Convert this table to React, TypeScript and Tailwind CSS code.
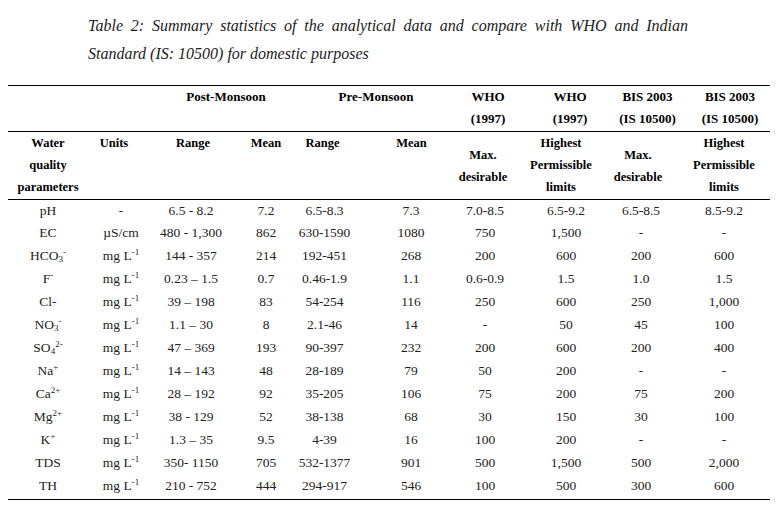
import React from 'react';

type Cell = React.ReactNode;

const Sup = ({ children }: { children: React.ReactNode }) => (
  <sup className="text-[9px] leading-none">{children}</sup>
);
const Sub = ({ children }: { children: React.ReactNode }) => (
  <sub className="text-[9px] leading-none">{children}</sub>
);

const mgL = (
  <>
    mg L<Sup>-1</Sup>
  </>
);

const rows: Cell[][] = [
  ['pH', '-', '6.5 - 8.2', '7.2', '6.5-8.3', '7.3', '7.0-8.5', '6.5-9.2', '6.5-8.5', '8.5-9.2'],
  ['EC', 'µS/cm', '480 - 1,300', '862', '630-1590', '1080', '750', '1,500', '-', '-'],
  [
    <>
      HCO<Sub>3</Sub>
      <Sup>-</Sup>
    </>,
    mgL, '144 - 357', '214', '192-451', '268', '200', '600', '200', '600',
  ],
  [
    <>
      F<Sup>-</Sup>
    </>,
    mgL, '0.23 – 1.5', '0.7', '0.46-1.9', '1.1', '0.6-0.9', '1.5', '1.0', '1.5',
  ],
  ['Cl-', mgL, '39 – 198', '83', '54-254', '116', '250', '600', '250', '1,000'],
  [
    <>
      NO<Sub>3</Sub>
      <Sup>-</Sup>
    </>,
    mgL, '1.1 – 30', '8', '2.1-46', '14', '-', '50', '45', '100',
  ],
  [
    <>
      SO<Sub>4</Sub>
      <Sup>2-</Sup>
    </>,
    mgL, '47 – 369', '193', '90-397', '232', '200', '600', '200', '400',
  ],
  [
    <>
      Na<Sup>+</Sup>
    </>,
    mgL, '14 – 143', '48', '28-189', '79', '50', '200', '-', '-',
  ],
  [
    <>
      Ca<Sup>2+</Sup>
    </>,
    mgL, '28 – 192', '92', '35-205', '106', '75', '200', '75', '200',
  ],
  [
    <>
      Mg<Sup>2+</Sup>
    </>,
    mgL, '38 - 129', '52', '38-138', '68', '30', '150', '30', '100',
  ],
  [
    <>
      K<Sup>+</Sup>
    </>,
    mgL, '1.3 – 35', '9.5', '4-39', '16', '100', '200', '-', '-',
  ],
  ['TDS', mgL, '350- 1150', '705', '532-1377', '901', '500', '1,500', '500', '2,000'],
  ['TH', mgL, '210 - 752', '444', '294-917', '546', '100', '500', '300', '600'],
];

const grid = 'grid grid-cols-[77px_72px_72px_66px_72px_80px_76px_76px_78px_94px]';
const bodyPad = ['pl-[3px]', '', 'pr-[4px]', 'pl-[8px]', 'pr-[13px]', 'pl-[8px]', '', 'pl-[10px]', 'pl-[6px]', ''];

const App = () => {
  return (
    <div className="w-[783px] h-[516px] bg-white text-[#1c1c1c] overflow-hidden font-['Liberation_Serif','Times_New_Roman',serif]">
      {/* caption */}
      <div className="pt-[12px] pl-[88px] text-[16px] leading-[28px] italic text-[#222]">
        <div className="w-[600px] text-justify [text-align-last:justify]">
          Table 2: Summary statistics of the analytical data and compare with WHO and Indian
        </div>
        <div>Standard (IS: 10500) for domestic purposes</div>
      </div>

      <div className="mt-[17px] ml-[8px] w-[762px]">
        <div className="border-t border-black" />

        {/* group headers */}
        <div className={`${grid} h-[45px] text-[13px] leading-[22px] font-bold text-black`}>
          <div />
          <div />
          <div className="col-span-2 text-center">Post-Monsoon</div>
          <div className="col-span-2 text-center pl-[10px]">Pre-Monsoon</div>
          <div className="text-center pl-[6px]">
            WHO
            <br />
            (1997)
          </div>
          <div className="text-center pl-[18px]">
            WHO
            <br />
            (1997)
          </div>
          <div className="text-center pl-[19px] whitespace-nowrap">
            BIS 2003
            <br />
            (IS 10500)
          </div>
          <div className="text-center pl-[12px] whitespace-nowrap">
            BIS 2003
            <br />
            (IS 10500)
          </div>
        </div>
        <div className="border-t border-black" />

        {/* column headers */}
        <div className={`${grid} h-[67px] text-[12.5px] leading-[22px] font-bold text-black`}>
          <div className="text-center pl-[3px]">
            Water
            <br />
            quality
            <br />
            parameters
          </div>
          <div className="text-center pr-[14px]">Units</div>
          <div className="text-center">Range</div>
          <div className="text-center pl-[8px]">Mean</div>
          <div className="text-center pr-[17px]">Range</div>
          <div className="text-center pl-[9px]">Mean</div>
          <div className="flex items-center justify-center text-center pr-[4px]">
            <div>
              Max.
              <br />
              desirable
            </div>
          </div>
          <div className="text-center">
            Highest
            <br />
            Permissible
            <br />
            limits
          </div>
          <div className="flex items-center justify-center text-center">
            <div>
              Max.
              <br />
              desirable
            </div>
          </div>
          <div className="text-center">
            Highest
            <br />
            Permissible
            <br />
            limits
          </div>
        </div>
        <div className="border-t border-black" />

        {/* data rows */}
        <div className="text-[13.5px] text-[#222]">
          {rows.map((row, i) => (
            <div key={i} className={`${grid} ${i === 0 ? 'h-[21px]' : 'h-[23px]'}`}>
              {row.map((cell, j) => (
                <div
                  key={j}
                  className={`flex items-center justify-center whitespace-nowrap leading-none ${bodyPad[j]}`}
                >
                  <span>{cell}</span>
                </div>
              ))}
            </div>
          ))}
        </div>
        <div className="mt-[2px] border-t border-black" />
      </div>
    </div>
  );
};

export default App;
